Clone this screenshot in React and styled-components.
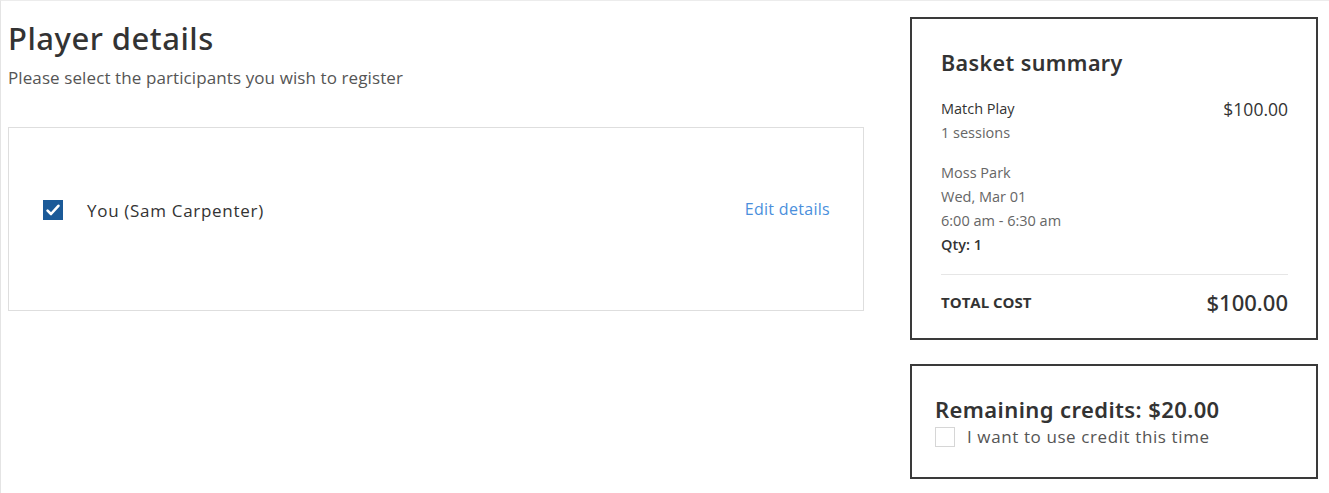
import styled, { createGlobalStyle } from 'styled-components';

const GlobalStyle = createGlobalStyle`
  html, body {
    margin: 0;
    padding: 0;
    background: #fff;
  }
  body {
    font-family: "Open Sans", "Liberation Sans", sans-serif;
    color: #333;
  }
`;

const Page = styled.div`
  display: flex;
  align-items: flex-start;
  gap: 46px;
  min-height: 493px;
  box-sizing: border-box;
  padding: 16px 11px 0 7px;
  border-top: 1px solid #ececec;
  border-left: 1px solid #e4e4e4;
`;

const Main = styled.main`
  flex: 0 0 856px;
`;

const Title = styled.h1`
  margin: 1px 0 0 0;
  font-family: "Noto Sans", "Open Sans", sans-serif;
  font-size: 31px;
  font-weight: 500;
  line-height: 40px;
  color: #333;
  letter-spacing: 0.5px;
`;

const Subtitle = styled.p`
  margin: 8px 0 0 0;
  font-size: 17px;
  line-height: 24px;
  color: #555;
  letter-spacing: 0.1px;
`;

const ParticipantCard = styled.section`
  margin-top: 37px;
  height: 184px;
  box-sizing: border-box;
  border: 1px solid #dedede;
  display: flex;
  align-items: center;
  justify-content: space-between;
  padding: 0 33px 18px 34px;
`;

const Participant = styled.label`
  display: flex;
  align-items: center;
  gap: 24px;
  font-size: 17px;
  letter-spacing: 0.7px;
  color: #333;
`;

const Box = styled.span`
  width: 20px;
  height: 20px;
  box-sizing: border-box;
  display: inline-flex;
  align-items: center;
  justify-content: center;
  flex-shrink: 0;
  background: ${({ $checked }) => ($checked ? '#1b5a98' : '#fff')};
  border: 1px solid ${({ $checked }) => ($checked ? '#1b5a98' : '#d6d6d6')};
`;

const EditLink = styled.a`
  font-size: 16px;
  letter-spacing: 0.3px;
  color: #4a8fdc;
  text-decoration: none;
  margin-bottom: 2px;
`;

const Aside = styled.aside`
  flex: 0 0 408px;
  display: flex;
  flex-direction: column;
  gap: 24px;
`;

const Panel = styled.section`
  border: 2px solid #3a3a3a;
  box-sizing: border-box;
  padding: ${({ $pad }) => $pad};
`;

const PanelTitle = styled.h2`
  margin: 0;
  font-family: "Noto Sans", "Open Sans", sans-serif;
  font-size: ${({ $size }) => $size};
  font-weight: 600;
  line-height: 28px;
  letter-spacing: 0.4px;
  color: #333;
`;

const ItemRow = styled.div`
  display: flex;
  justify-content: space-between;
  align-items: flex-start;
  margin-top: 20px;
`;

const ItemName = styled.div`
  font-size: 14.5px;
  font-weight: 500;
  line-height: 24px;
  color: #333;
`;

const Price = styled.div`
  font-size: 17.5px;
  font-weight: 500;
  line-height: 24px;
  color: #333;
`;

const Line = styled.div`
  font-size: 14.5px;
  line-height: 24px;
  color: ${({ $strong }) => ($strong ? '#333' : '#666')};
  font-weight: ${({ $strong }) => ($strong ? 600 : 400)};
`;

const Details = styled.div`
  margin-top: 16px;
`;

const Divider = styled.hr`
  border: 0;
  border-top: 1px solid #e6e6e6;
  margin: 17px 0 0 0;
`;

const TotalRow = styled.div`
  display: flex;
  justify-content: space-between;
  align-items: center;
  margin-top: 12px;
  height: 30px;
`;

const TotalLabel = styled.span`
  font-size: 15px;
  font-weight: 700;
  color: #333;
`;

const TotalValue = styled.span`
  font-family: "Noto Sans", "Open Sans", sans-serif;
  font-size: 22px;
  font-weight: 500;
  color: #333;
`;

const CreditOption = styled.label`
  display: flex;
  align-items: center;
  gap: 12px;
  margin-top: 3px;
  font-size: 17px;
  letter-spacing: 0.6px;
  color: #555;
  line-height: 22px;
`;

const Check = ({ checked }) => (
  <Box $checked={checked}>
    {checked && (
      <svg width="14" height="12" viewBox="0 0 14 12">
        <path d="M1.6 6.6 L5 10 L12.4 1.8" fill="none" stroke="#fff" strokeWidth="2.6" strokeLinecap="round" strokeLinejoin="round" />
      </svg>
    )}
  </Box>
);

export default function App() {
  return (
    <>
      <GlobalStyle />
      <Page>
        <Main>
          <Title>Player details</Title>
          <Subtitle>Please select the participants you wish to register</Subtitle>
          <ParticipantCard>
            <Participant>
              <Check checked />
              You (Sam Carpenter)
            </Participant>
            <EditLink href="#">Edit details</EditLink>
          </ParticipantCard>
        </Main>
        <Aside>
          <Panel $pad="30px 28px 21px 29px">
            <PanelTitle $size="21.5px">Basket summary</PanelTitle>
            <ItemRow>
              <div>
                <ItemName>Match Play</ItemName>
                <Line>1 sessions</Line>
              </div>
              <Price>$100.00</Price>
            </ItemRow>
            <Details>
              <Line>Moss Park</Line>
              <Line>Wed, Mar 01</Line>
              <Line>6:00 am - 6:30 am</Line>
              <Line $strong>Qty: 1</Line>
            </Details>
            <Divider />
            <TotalRow>
              <TotalLabel>TOTAL COST</TotalLabel>
              <TotalValue>$100.00</TotalValue>
            </TotalRow>
          </Panel>
          <Panel $pad="29px 22px 29px 23px">
            <PanelTitle $size="22px">Remaining credits: $20.00</PanelTitle>
            <CreditOption>
              <Check />
              I want to use credit this time
            </CreditOption>
          </Panel>
        </Aside>
      </Page>
    </>
  );
}
